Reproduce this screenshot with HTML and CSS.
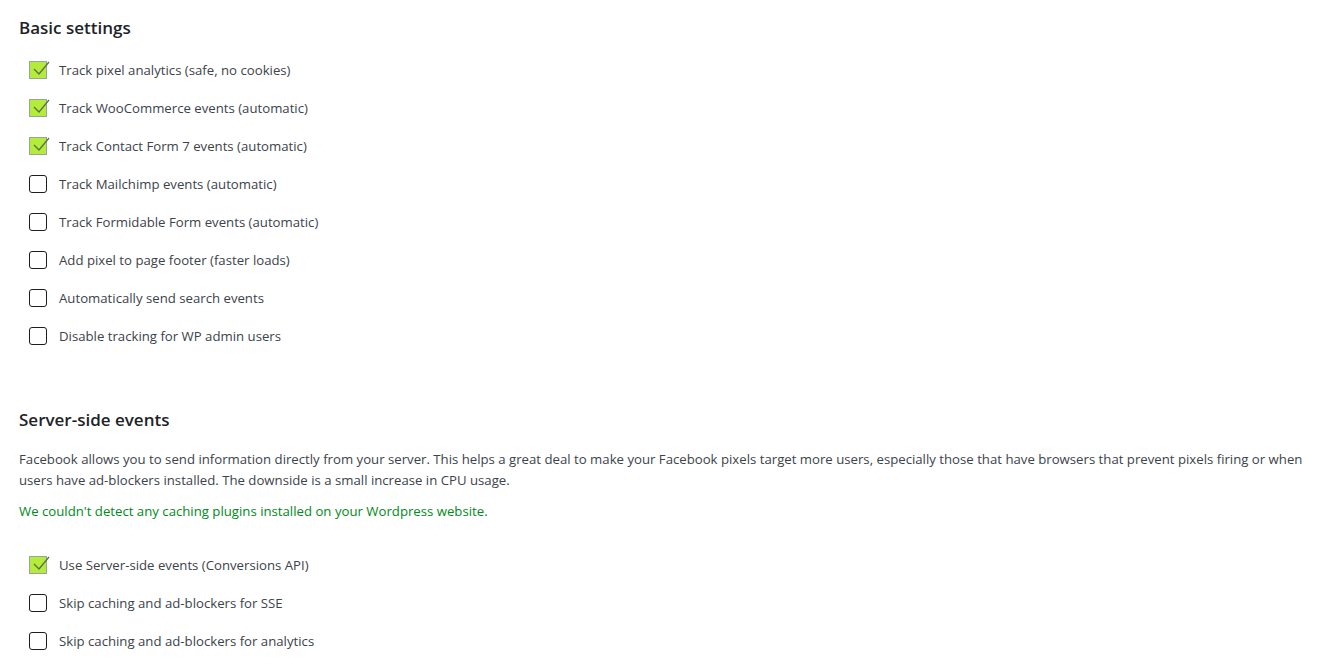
FILE: index.html
```html
<!DOCTYPE html>
<html lang="en">
<head>
<meta charset="utf-8">
<title>Settings</title>
<link rel="stylesheet" href="styles.css">
</head>
<body>
<div class="page">
  <section class="section">
    <h2 class="title">Basic settings</h2>
    <ul class="options">
      <li class="option"><span class="box checked"><svg viewBox="0 0 22 20" width="22" height="20"><path class="tick" d="M4 10 L9 15 L19 3"/></svg></span><span class="label">Track pixel analytics (safe, no cookies)</span></li>
      <li class="option"><span class="box checked"><svg viewBox="0 0 22 20" width="22" height="20"><path class="tick" d="M4 10 L9 15 L19 3"/></svg></span><span class="label">Track WooCommerce events (automatic)</span></li>
      <li class="option"><span class="box checked"><svg viewBox="0 0 22 20" width="22" height="20"><path class="tick" d="M4 10 L9 15 L19 3"/></svg></span><span class="label">Track Contact Form 7 events (automatic)</span></li>
      <li class="option"><span class="box"></span><span class="label">Track Mailchimp events (automatic)</span></li>
      <li class="option"><span class="box"></span><span class="label">Track Formidable Form events (automatic)</span></li>
      <li class="option"><span class="box"></span><span class="label">Add pixel to page footer (faster loads)</span></li>
      <li class="option"><span class="box"></span><span class="label">Automatically send search events</span></li>
      <li class="option"><span class="box"></span><span class="label">Disable tracking for WP admin users</span></li>
    </ul>
  </section>
  <section class="section server">
    <h2 class="title">Server-side events</h2>
    <p class="desc">Facebook allows you to send information directly from your server. This helps a great deal to make your Facebook pixels target more users, especially those that have browsers that prevent pixels firing or when users have ad-blockers installed. The downside is a small increase in CPU usage.</p>
    <p class="notice">We couldn't detect any caching plugins installed on your Wordpress website.</p>
    <ul class="options">
      <li class="option"><span class="box checked"><svg viewBox="0 0 22 20" width="22" height="20"><path class="tick" d="M4 10 L9 15 L19 3"/></svg></span><span class="label">Use Server-side events (Conversions API)</span></li>
      <li class="option"><span class="box"></span><span class="label">Skip caching and ad-blockers for SSE</span></li>
      <li class="option"><span class="box"></span><span class="label">Skip caching and ad-blockers for analytics</span></li>
    </ul>
  </section>
</div>
</body>
</html>
```
FILE: styles.css
```css
* { box-sizing: border-box; }
html, body { margin: 0; padding: 0; background: #fff; }
body {
  font-family: "Open Sans", "Noto Sans", "Liberation Sans", sans-serif;
  font-size: 13.2px;
  color: #3c434a;
}
.page { padding: 14px 19px 0 19px; width: 1330px; }
.title {
  margin: 0;
  font-size: 17px;
  font-weight: 600;
  color: #1d2327;
  line-height: 28px;
}
.options { list-style: none; margin: 9px 0 0 0; padding: 0 0 0 10px; }
.option { display: flex; align-items: center; height: 38px; }
.box {
  position: relative;
  width: 18px; height: 18px;
  border: 1.5px solid #1e1e1e;
  border-radius: 3px;
  margin-right: 12px;
  flex: none;
}
.box.checked {
  background: #b3ec3a;
  border: 1px solid #9aa59a;
  border-radius: 0;
}
.box svg { position: absolute; left: 0; top: -3px; }
.tick { fill: none; stroke: #5b6e4a; stroke-width: 1.3; }
.label { line-height: 18px; }
.server { margin-top: 51px; }
.desc { margin: 15px 0 0 0; line-height: 21px; }
.notice { margin: 10px 0 0 0; line-height: 21px; color: #008a20; }
.server .options { margin-top: 24px; }
```
